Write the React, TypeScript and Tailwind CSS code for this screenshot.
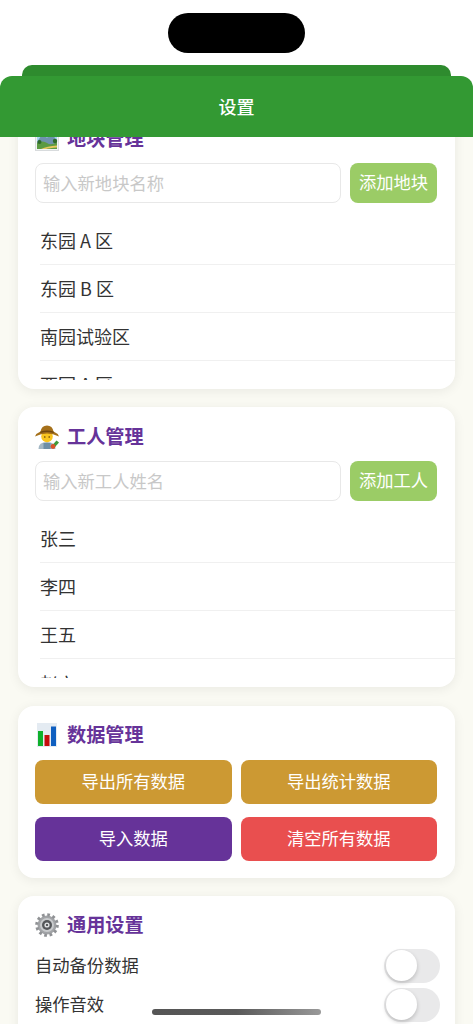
const cjk = { fontFamily: '"Noto Sans CJK SC", "Noto Sans", sans-serif' };

function ParkIcon() {
  return (
    <svg className="w-[24px] h-[24px]" viewBox="0 0 24 24">
      <rect x="0.5" y="0.5" width="23" height="23" fill="#f1f3f4" stroke="#d8dbdd" />
      <rect x="2" y="2" width="20" height="20" fill="#a5d3f0" />
      <path d="M2 15 L8 6 L12 11 L16 5 L22 14 V22 H2 Z" fill="#6f93ad" />
      <path d="M2 16 Q8 13 12 16 T22 15 V22 H2 Z" fill="#5c9a42" />
      <path d="M6 22 Q12 19 22 18.5 V20.5 Q14 21 11 22 Z" fill="#e8c95f" />
      <circle cx="4.5" cy="15" r="2" fill="#2f6b2a" />
      <circle cx="20" cy="14" r="2.2" fill="#2f6b2a" />
    </svg>
  );
}

function FarmerIcon() {
  return (
    <svg className="w-[24px] h-[24px]" viewBox="0 0 24 24">
      <path d="M3.5 24 Q3.5 17 12 17 Q20.5 17 20.5 24 Z" fill="#a3b7c4" />
      <path d="M8.5 18 H15.5 V24 H8.5 Z" fill="#6d8fa6" />
      <circle cx="12" cy="11.5" r="5.8" fill="#f9c51f" />
      <path d="M0 11.5 Q1.5 8 5.5 6.5 Q6.5 0.5 12 0.5 Q17.5 0.5 18.5 6.5 Q22.5 8 24 11.5 Q12 5.5 0 11.5 Z" fill="#a5701a" />
      <path d="M5.5 6.5 Q12 4.5 18.5 6.5 L19 8 Q12 6 5 8 Z" fill="#70480f" />
      <circle cx="9.8" cy="12" r="0.8" fill="#5a3b06" />
      <circle cx="14.2" cy="12" r="0.8" fill="#5a3b06" />
      <path d="M16.5 21 L21.5 15.5 L24 17.5 L20 22 Z" fill="#3f9b3a" />
      <circle cx="18" cy="21.5" r="2.4" fill="#d9542b" />
    </svg>
  );
}

function ChartIcon() {
  return (
    <svg className="w-[24px] h-[24px]" viewBox="0 0 24 24">
      <rect x="2" y="0" width="20" height="24" fill="#e4ebf2" />
      <rect x="3" y="8" width="5" height="15" fill="#0fb02c" />
      <rect x="9.5" y="12" width="5" height="11" fill="#c40d0d" />
      <rect x="16" y="3.5" width="5" height="19.5" fill="#0f5fc0" />
    </svg>
  );
}

function GearIcon() {
  return (
    <svg className="w-[24px] h-[24px]" viewBox="0 0 24 24">
      <circle cx="12" cy="12" r="9.5" fill="#a2a4a7" />
      <circle cx="12" cy="12" r="10.3" fill="none" stroke="#8f9194" strokeWidth="3" strokeDasharray="2.7 2.69" />
      <circle cx="12" cy="12" r="7" fill="#c9cbcd" />
      <circle cx="12" cy="12" r="5" fill="#55575a" />
      <circle cx="12" cy="12" r="2.6" fill="#dcdee0" />
      <circle cx="12" cy="12" r="1.1" fill="#3a3b3d" />
    </svg>
  );
}

function CardTitle({ icon, title }: { icon: React.ReactNode; title: string }) {
  return (
    <div className="flex items-center gap-[8px] h-[24px]">
      {icon}
      <h2 className="text-[19.2px] leading-[24px] pb-[2px] font-bold text-[#663399]">{title}</h2>
    </div>
  );
}

function ManageCard({
  icon,
  title,
  placeholder,
  button,
  items,
}: {
  icon: React.ReactNode;
  title: string;
  placeholder: string;
  button: string;
  items: string[];
}) {
  return (
    <section className="bg-white rounded-[16px] shadow-[0_2px_12px_rgba(0,0,0,0.07)] pt-[18px] pb-[9px] pl-[17px]">
      <CardTitle icon={icon} title={title} />
      <div className="flex gap-[9px] mt-[12px] pr-[18px]">
        <input
          placeholder={placeholder}
          readOnly
          className="flex-1 min-w-0 h-[40px] border border-[#e8e8e8] rounded-[8px] px-[7px] pb-[2px] text-[17.3px] bg-white outline-none placeholder:text-[#c8c8c8]"
          style={cjk}
        />
        <button className="w-[87px] h-[40px] rounded-[8px] bg-[#9bcc66] text-white text-[17.3px] pb-[2px]">
          {button}
        </button>
      </div>
      <ul className="mt-[13.6px] h-[163.4px] overflow-hidden pl-[5px]">
        {items.map((item) => (
          <li
            key={item}
            className="h-[48.2px] border-b border-[#f0f0f0] flex items-center text-[18px] text-[#333]"
          >
            {item}
          </li>
        ))}
      </ul>
    </section>
  );
}

function ActionButton({ label, color }: { label: string; color: string }) {
  return (
    <button className={`h-[44px] rounded-[8px] text-white text-[17.3px] pb-[2px] ${color}`}>{label}</button>
  );
}

function ToggleRow({ label }: { label: string }) {
  return (
    <div className="flex items-center justify-between h-[34px] -mr-[3px]">
      <span className="text-[17.3px] text-[#333] pb-[1px]">{label}</span>
      <div className="w-[56px] h-[34px] rounded-full bg-[#e9e9ea] p-[1.5px]">
        <div className="w-[31px] h-[31px] rounded-full bg-white shadow-[0_2px_4px_rgba(0,0,0,0.2)]" />
      </div>
    </div>
  );
}

export default function App() {
  return (
    <div className="relative h-[1024px] overflow-hidden bg-white flex flex-col" style={cjk}>
      {/* Header */}
      <div className="pt-[65px]">
        <div className="mx-[22px] h-[11px] bg-[#2e8b2e] rounded-t-[10px]" />
      </div>
      <header className="relative z-10 h-[61px] bg-[#339933] rounded-t-[12px] flex items-center justify-center text-white text-[18px] font-medium pb-[1px]">
        设置
      </header>

      {/* Scrolled content */}
      <main className="flex-1 overflow-hidden bg-[#fafaf3] px-[18px]">
        <div className="-mt-[28px] flex flex-col gap-[18.3px]">
          <ManageCard
            icon={<ParkIcon />}
            title="地块管理"
            placeholder="输入新地块名称"
            button="添加地块"
            items={["东园 A 区", "东园 B 区", "南园试验区", "西园 A 区"]}
          />
          <ManageCard
            icon={<FarmerIcon />}
            title="工人管理"
            placeholder="输入新工人姓名"
            button="添加工人"
            items={["张三", "李四", "王五", "赵六"]}
          />

          <section className="bg-white rounded-[16px] shadow-[0_2px_12px_rgba(0,0,0,0.07)] pt-[17px] pb-[17px] pl-[17px] pr-[18px]">
            <CardTitle icon={<ChartIcon />} title="数据管理" />
            <div className="grid grid-cols-2 gap-x-[9px] gap-y-[13px] mt-[13px]">
              <ActionButton label="导出所有数据" color="bg-[#cc9933]" />
              <ActionButton label="导出统计数据" color="bg-[#cc9933]" />
              <ActionButton label="导入数据" color="bg-[#663399]" />
              <ActionButton label="清空所有数据" color="bg-[#e94f4f]" />
            </div>
          </section>

          <section className="bg-white rounded-[16px] shadow-[0_2px_12px_rgba(0,0,0,0.07)] pt-[17px] pb-[40px] pl-[17px] pr-[18px]">
            <CardTitle icon={<GearIcon />} title="通用设置" />
            <div className="flex flex-col gap-[5px] mt-[12px]">
              <ToggleRow label="自动备份数据" />
              <ToggleRow label="操作音效" />
            </div>
          </section>
        </div>
      </main>

      {/* Device overlays */}
      <div className="absolute z-20 left-[168px] top-[13px] w-[137px] h-[40px] rounded-[20px] bg-black" />
      <div className="absolute z-20 left-[152px] top-[1009px] w-[169px] h-[6px] rounded-full bg-gradient-to-r from-[#555] via-[#5a5a5a] to-[#999]" />
    </div>
  );
}
